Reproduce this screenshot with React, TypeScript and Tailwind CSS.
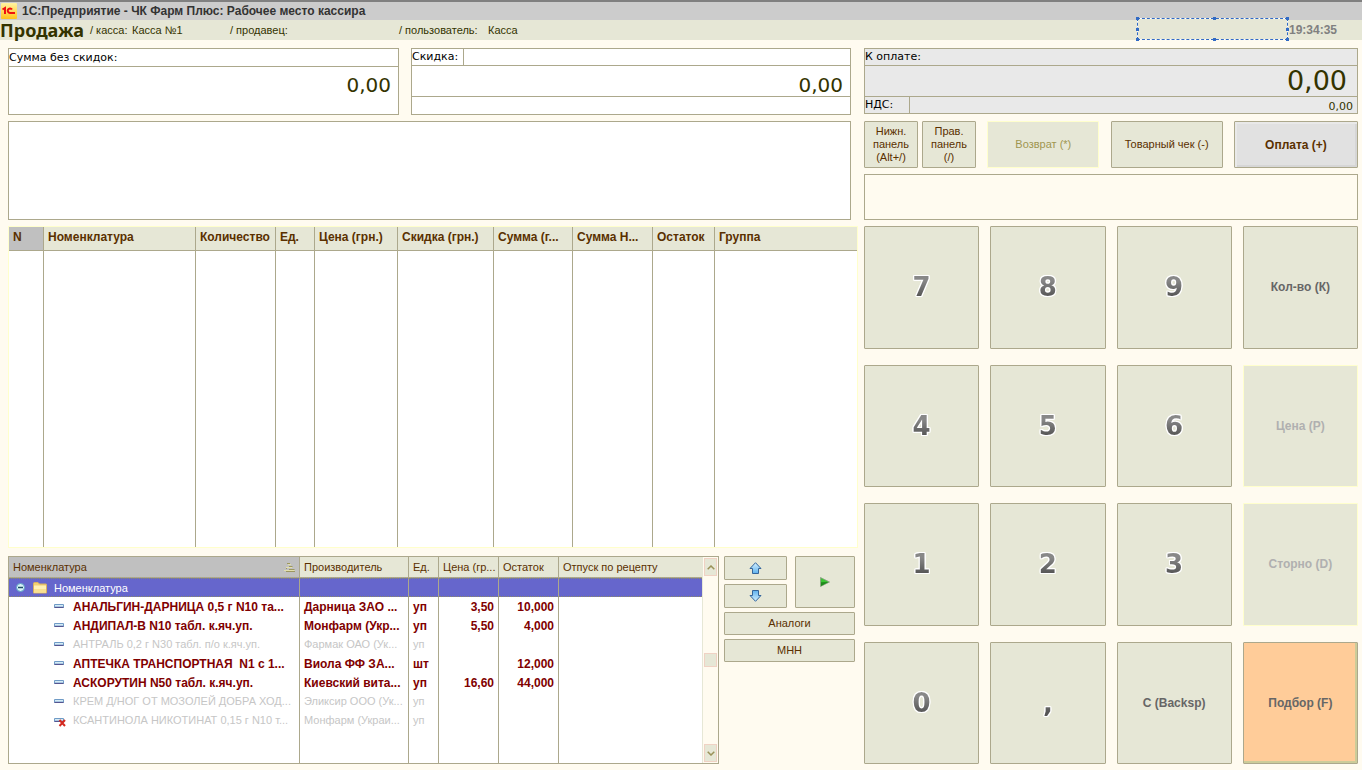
import { ReactNode } from "react";
import clsx from "clsx";

interface Product {
  name: string;
  maker: string;
  unit: string;
  price?: string;
  rest?: string;
  inStock: boolean;
  deleted?: boolean;
}

const products: Product[] = [
  { name: "АНАЛЬГИН-ДАРНИЦА 0,5 г N10 та...", maker: "Дарница ЗАО ...", unit: "уп", price: "3,50", rest: "10,000", inStock: true },
  { name: "АНДИПАЛ-В N10 табл. к.яч.уп.", maker: "Монфарм (Укр...", unit: "уп", price: "5,50", rest: "4,000", inStock: true },
  { name: "АНТРАЛЬ 0,2 г N30 табл. п/о к.яч.уп.", maker: "Фармак ОАО (Ук...", unit: "уп", inStock: false },
  { name: "АПТЕЧКА ТРАНСПОРТНАЯ  N1 с 1...", maker: "Виола ФФ ЗА...", unit: "шт", rest: "12,000", inStock: true },
  { name: "АСКОРУТИН N50 табл. к.яч.уп.", maker: "Киевский вита...", unit: "уп", price: "16,60", rest: "44,000", inStock: true },
  { name: "КРЕМ Д/НОГ ОТ МОЗОЛЕЙ ДОБРА ХОД...", maker: "Эликсир ООО (Ук...", unit: "уп", inStock: false },
  { name: "КСАНТИНОЛА НИКОТИНАТ 0,15 г N10 т...", maker: "Монфарм (Украи...", unit: "уп", inStock: false, deleted: true },
];

const saleColumns = [
  { title: "N", width: "w-[35px]" },
  { title: "Номенклатура", width: "w-[152px]" },
  { title: "Количество", width: "w-[80px]" },
  { title: "Ед.", width: "w-[39px]" },
  { title: "Цена (грн.)", width: "w-[83px]" },
  { title: "Скидка (грн.)", width: "w-[96px]" },
  { title: "Сумма (г...", width: "w-[79px]" },
  { title: "Сумма Н...", width: "w-[80px]" },
  { title: "Остаток", width: "w-[62px]" },
  { title: "Группа", width: "" },
];

const stockColumns = [
  { title: "Производитель", width: "w-[109px]" },
  { title: "Ед.", width: "w-[30px]" },
  { title: "Цена (гр...", width: "w-[60px]" },
  { title: "Остаток", width: "w-[60px]" },
  { title: "Отпуск по рецепту", width: "" },
];

interface Key {
  label: string;
  kind: "digit" | "action" | "disabled" | "active";
}

const keys: Key[] = [
  { label: "7", kind: "digit" },
  { label: "8", kind: "digit" },
  { label: "9", kind: "digit" },
  { label: "Кол-во (К)", kind: "action" },
  { label: "4", kind: "digit" },
  { label: "5", kind: "digit" },
  { label: "6", kind: "digit" },
  { label: "Цена (Р)", kind: "disabled" },
  { label: "1", kind: "digit" },
  { label: "2", kind: "digit" },
  { label: "3", kind: "digit" },
  { label: "Сторно (D)", kind: "disabled" },
  { label: "0", kind: "digit" },
  { label: ",", kind: "digit" },
  { label: "C (Backsp)", kind: "action" },
  { label: "Подбор (F)", kind: "active" },
];

function LogoIcon() {
  return (
    <svg width="16" height="16" viewBox="0 0 16 16" aria-hidden="true">
      <defs>
        <linearGradient id="logo" x1="0" y1="0" x2="0" y2="1">
          <stop offset="0" stopColor="#fff3a0" />
          <stop offset="1" stopColor="#ffc21c" />
        </linearGradient>
      </defs>
      <rect width="16" height="16" rx="1" fill="url(#logo)" />
      <path d="M1.500 6.500l2.500-1.500V11" fill="none" stroke="#ee1010" strokeWidth="2" />
      <path d="M11 6.500A2.300 2.300 0 1 0 9 10H14" fill="none" stroke="#ee1010" strokeWidth="2" />
    </svg>
  );
}

function FolderIcon() {
  return (
    <svg width="14" height="12" viewBox="0 0 14 12" aria-hidden="true">
      <path d="M.5 11V1.500Q.5.500 1.500.500H5l1.500 1.500H13q.5 0 .5.500V11z" fill="#f0cf70" stroke="#d8b060" />
      <path d="M1 10.500V3.500H13V10.500z" fill="#fff0b4" />
      <path d="M1 7H13V10.500H1z" fill="#f9e090" />
    </svg>
  );
}

function CollapseIcon() {
  return (
    <svg width="9" height="9" viewBox="0 0 9 9" aria-hidden="true">
      <circle cx="4.500" cy="4.500" r="4" fill="#d9f3f7" stroke="#5b9fc4" />
      <path d="M2 4.500h5" stroke="#1c4f66" strokeWidth="1.500" />
    </svg>
  );
}

function ItemIcon({ deleted }: { deleted?: boolean }) {
  return (
    <svg width="12" height="10" viewBox="0 0 12 10" className="shrink-0 overflow-visible" aria-hidden="true">
      <rect y="2" width="10" height="4" rx="1" fill="#6f9bc6" />
      <path d="M.5 5.500h9" stroke="#555590" />
      <path d="M1 3.500h8" stroke="#d6ecf6" />
      <path d="M1 4.500h8" stroke="#a9c6e2" />
      {deleted && <path d="M5.500 4l5.500 6M11 4l-5.500 6" stroke="#d42a20" strokeWidth="2" />}
    </svg>
  );
}

function SortIcon() {
  return (
    <svg width="12" height="9" viewBox="0 0 12 9" aria-hidden="true">
      <path d="M5 1.500h3M3 4.500h6M1 7.500h10.500" stroke="#e2dfae" strokeWidth="1" />
      <path d="M4 .5h3M6 3.500h3.500M3 5.500h1M6 6.500h5.500M3 8.500h9" stroke="#9c9760" strokeWidth="1" />
    </svg>
  );
}

function ArrowIcon({ down }: { down?: boolean }) {
  return (
    <svg width="13" height="12" viewBox="0 0 13 12" className={clsx(down && "rotate-180")} aria-hidden="true">
      <defs>
        <linearGradient id="arrow" x1="0" y1="0" x2="0" y2="1">
          <stop offset="0" stopColor="#d4f0ff" />
          <stop offset="1" stopColor="#5eb1ee" />
        </linearGradient>
      </defs>
      <path d="M6.500.700L12 6.500H9.500V11.500H3.500V6.500H1z" fill="url(#arrow)" stroke="#34659c" />
    </svg>
  );
}

function ScrollButton({ down }: { down?: boolean }) {
  return (
    <button
      type="button"
      aria-label={down ? "Вниз" : "Вверх"}
      className="flex h-[18px] w-[13px] items-center justify-center border border-[#f0d2c4] bg-[#e6e7d6]"
    >
      <svg width="8" height="5" viewBox="0 0 8 5" className={clsx(down && "rotate-180")} aria-hidden="true">
        <path d="M.7 4.300L4 1l3.300 3.300" fill="none" stroke="#9a9258" strokeWidth="1.500" />
      </svg>
    </button>
  );
}

interface PanelButtonProps {
  children: ReactNode;
  className?: string;
  disabled?: boolean;
  label?: string;
}

function PanelButton({ children, className, disabled, label }: PanelButtonProps) {
  return (
    <button
      type="button"
      disabled={disabled}
      aria-label={label}
      className={clsx(
        "flex items-center justify-center rounded-[1px] border bg-[#e6e7d6] text-center leading-[13px]",
        disabled ? "border-[#ffffcc] text-[#a09650]" : "border-[#aca88c] text-[#5a3000]",
        className
      )}
    >
      {children}
    </button>
  );
}

function KeyButton({ label, kind }: Key) {
  return (
    <button
      type="button"
      disabled={kind === "disabled"}
      className={clsx(
        "flex items-center justify-center rounded-[1px] border text-[12px] font-bold",
        kind === "digit" && "border-[#aca88c] bg-[#e6e7d6]",
        kind === "action" && "border-[#aca88c] bg-[#e6e7d6] text-[#666666]",
        kind === "disabled" && "border-[#ffffcc] bg-[#e6e7d6] text-[#b0b0b0]",
        kind === "active" &&
          "border-[#aca88c] bg-[#ffcc99] text-[#666666] shadow-[inset_-2px_-2px_0_#cccc99]"
      )}
    >
      {kind === "digit" ? (
        <span className="[filter:drop-shadow(1px_0_0_#fff)_drop-shadow(-1px_0_0_#fff)_drop-shadow(0_1px_0_#fff)_drop-shadow(0_-1px_0_#fff)]">
          <span className="block bg-linear-to-b from-[#888888] from-30% to-[#555555] to-80% bg-clip-text px-1 font-['DejaVu_Sans',sans-serif] text-[26px] leading-8 text-transparent">
            {label}
          </span>
        </span>
      ) : (
        label
      )}
    </button>
  );
}

function SelectionFrame() {
  return (
    <div className="relative -mt-[2px] ml-auto h-[22px] w-[151px] self-start border border-dashed border-[#316ac5] bg-white">
      <div className="size-full bg-[#e6e7d6]" />
      <i className="absolute -top-[2px] -left-[2px] size-[3px] bg-[#316ac5]" />
      <i className="absolute -top-[2px] left-1/2 size-[3px] bg-[#316ac5]" />
      <i className="absolute -top-[2px] -right-[2px] size-[3px] bg-[#316ac5]" />
      <i className="absolute top-[9px] -left-[2px] size-[3px] bg-[#316ac5]" />
      <i className="absolute top-[9px] -right-[2px] size-[3px] bg-[#316ac5]" />
      <i className="absolute -bottom-[2px] -left-[2px] size-[3px] bg-[#316ac5]" />
      <i className="absolute -bottom-[2px] left-1/2 size-[3px] bg-[#316ac5]" />
      <i className="absolute -right-[2px] -bottom-[2px] size-[3px] bg-[#316ac5]" />
    </div>
  );
}

function TopBar() {
  return (
    <header>
      <div className="flex h-5 items-center gap-[5px] border-t-2 border-[#808080] bg-[#cccccc] pl-px">
        <LogoIcon />
        <span className="text-[12px] font-bold text-[#333333]">
          1С:Предприятие - ЧК Фарм Плюс: Рабочее место кассира
        </span>
      </div>
      <div className="flex h-5 items-center bg-[#e6e7d6] text-[11px] text-[#333300]">
        <h1 className="w-[90px] font-['Noto_Sans',sans-serif] text-[18px] leading-5 font-bold">Продажа</h1>
        <span className="w-[42px]">/ касса:</span>
        <span className="w-[98px]">Касса №1</span>
        <span className="w-[169px]">/ продавец:</span>
        <span className="w-[89px]">/ пользователь:</span>
        <span>Касса</span>
        <SelectionFrame />
        <time className="w-[74px] pl-px text-[12px] font-bold text-[#808080]">19:34:35</time>
      </div>
    </header>
  );
}

function Totals() {
  return (
    <div className="mr-[7px] flex gap-3 font-['DejaVu_Sans',sans-serif] text-[11px] text-black">
      <div className="flex h-[67px] w-[391px] flex-col border border-[#aca88c] bg-white">
        <label htmlFor="subtotal" className="h-[18px] border-b border-[#aca88c] leading-[18px]">
          Сумма без скидок:
        </label>
        <input
          id="subtotal"
          readOnly
          value="0,00"
          className="h-9 w-full pr-[7px] text-right text-[20px] text-[#333300] outline-none"
        />
      </div>
      <div className="flex h-[67px] flex-1 flex-col border border-[#aca88c] bg-white">
        <div className="flex h-[17px] border-b border-[#aca88c]">
          <label htmlFor="discount" className="w-[52px] border-r border-[#aca88c] leading-4">
            Скидка:
          </label>
        </div>
        <input
          id="discount"
          readOnly
          value="0,00"
          className="h-[31px] w-full border-b border-[#aca88c] pt-2 pr-[7px] text-right text-[20px] text-[#333300] outline-none"
        />
      </div>
    </div>
  );
}

function SaleTable() {
  return (
    <table className="w-full table-fixed border-separate border-spacing-0 border border-[#ffffcc] bg-white">
      <thead>
        <tr className="h-[24px]">
          {saleColumns.map((col, i) => (
            <th
              key={col.title}
              className={clsx(
                "border-b border-[#aca88c] pb-1 pl-1 text-left text-[12px] font-bold whitespace-nowrap text-[#5a3000]",
                i === 0 ? "bg-[#c0c0c0]" : "bg-[#e6e7d6]",
                i < saleColumns.length - 1 && "border-r",
                col.width
              )}
            >
              {col.title}
            </th>
          ))}
        </tr>
      </thead>
      <tbody>
        <tr className="h-[296px]">
          {saleColumns.map((col, i) => (
            <td key={col.title} className={clsx("border-[#aca88c]", i < saleColumns.length - 1 && "border-r")} />
          ))}
        </tr>
      </tbody>
    </table>
  );
}

function StockTable() {
  const cell = "border-r border-[#aca88c] px-1";
  const selected = "border-y border-r border-y-[#8c8a6a] border-r-[#aca88c] [border-block-style:dotted]";

  return (
    <div className="flex flex-1 border border-[#aca88c] bg-white">
      <table className="w-full flex-1 table-fixed border-separate border-spacing-0 text-[11px] whitespace-nowrap">
        <thead>
          <tr className="h-[21px] text-left text-[#5a3000]">
            <th className="w-[291px] border-r border-b border-[#aca88c] bg-[#c0c0c0] pr-1 pl-1 font-normal">
              <div className="flex items-center justify-between">
                Номенклатура
                <SortIcon />
              </div>
            </th>
            {stockColumns.map((col, i) => (
              <th
                key={col.title}
                className={clsx(
                  "border-b border-[#aca88c] bg-[#e6e7d6] pl-1 font-normal",
                  i < stockColumns.length - 1 && "border-r",
                  col.width
                )}
              >
                {col.title}
              </th>
            ))}
          </tr>
        </thead>
        <tbody>
          <tr className="h-[19px] bg-[#6666cc] text-white">
            <td className={selected}>
              <div className="flex items-center pl-[7px]">
                <CollapseIcon />
                <span className="w-2" />
                <FolderIcon />
                <span className="pl-[7px] leading-4">Номенклатура</span>
              </div>
            </td>
            {stockColumns.map((col, i) => (
              <td key={col.title} className={clsx(selected, i === stockColumns.length - 1 && "border-r-0")} />
            ))}
          </tr>
          {products.map((item) => (
            <tr
              key={item.name}
              className={clsx("h-[19px]", item.inStock ? "text-[12px] font-bold text-[#800000]" : "text-[#c6c6c6]")}
            >
              <td className="border-r border-[#aca88c]">
                <div className="flex items-center gap-[7px] pl-[45px]">
                  <ItemIcon deleted={item.deleted} />
                  <span className="whitespace-pre">{item.name}</span>
                </div>
              </td>
              <td className="border-r border-[#aca88c] pl-1">{item.maker}</td>
              <td className={cell}>{item.unit}</td>
              <td className={clsx(cell, "text-right")}>{item.price}</td>
              <td className={clsx(cell, "text-right")}>{item.rest}</td>
              <td />
            </tr>
          ))}
          <tr className="h-[33px]">
            <td className={cell} />
            <td className={cell} />
            <td className={cell} />
            <td className={cell} />
            <td className={cell} />
            <td />
          </tr>
        </tbody>
      </table>
      <div className="flex w-4 flex-col items-center justify-between border-l border-[#e6e7d6] bg-[#fffbf0] py-px">
        <ScrollButton />
        <div className="h-[14px] w-[13px] border border-[#f0d2c4] bg-[#e6e7d6]" />
        <ScrollButton down />
      </div>
    </div>
  );
}

function StockActions() {
  return (
    <div className="flex w-[131px] flex-col gap-1 text-[11px]">
      <div className="flex gap-2">
        <div className="flex flex-col gap-1">
          <PanelButton label="Переместить вверх" className="h-6 w-[63px]">
            <ArrowIcon />
          </PanelButton>
          <PanelButton label="Переместить вниз" className="h-6 w-[63px]">
            <ArrowIcon down />
          </PanelButton>
        </div>
        <PanelButton label="Выбрать" className="flex-1">
          <svg width="10" height="10" viewBox="0 0 10 10" aria-hidden="true">
            <path d="M.5.500L9.500 5L.5 9.500z" fill="#3cc434" stroke="#8a9c84" strokeWidth=".8" />
            <path d="M1 5.200L8.500 5L1 9z" fill="#1f8a1c" />
          </svg>
        </PanelButton>
      </div>
      <PanelButton className="h-[23px]">Аналоги</PanelButton>
      <PanelButton className="h-[23px]">МНН</PanelButton>
    </div>
  );
}

function Payment() {
  return (
    <div className="h-[66px] border border-[#aca88c] bg-[#e9e9e9] font-['DejaVu_Sans',sans-serif] text-[11px] text-black">
      <label htmlFor="total" className="block h-[17px] border-b border-[#aca88c] leading-4">
        К оплате:
      </label>
      <input
        id="total"
        readOnly
        value="0,00"
        className="block h-[31px] w-full border-b border-[#aca88c] pr-[10px] text-right text-[27px] text-[#333300] outline-none"
      />
      <div className="flex h-4">
        <label htmlFor="vat" className="w-[45px] border-r border-[#aca88c] leading-4">
          НДС:
        </label>
        <input
          id="vat"
          readOnly
          value="0,00"
          className="min-w-0 flex-1 pt-1 pr-1 text-right text-[#333300] outline-none"
        />
      </div>
    </div>
  );
}

export default function App() {
  return (
    <div className="flex min-h-screen flex-col bg-[#fffbf0] font-['Liberation_Sans',Arial,sans-serif]">
      <TopBar />
      <main className="flex flex-1 gap-[6px] pt-2 pr-1 pb-[6px] pl-2">
        <section className="flex min-w-0 flex-1 flex-col">
          <Totals />
          <textarea
            readOnly
            aria-label="Сообщения"
            className="mt-[6px] mr-[7px] mb-[6px] block h-[99px] resize-none border border-[#aca88c] bg-white outline-none"
          />
          <SaleTable />
          <div className="mt-2 mr-[3px] flex flex-1 gap-[5px]">
            <StockTable />
            <StockActions />
          </div>
        </section>
        <section className="flex w-[494px] shrink-0 flex-col gap-[6px]">
          <Payment />
          <div className="mt-px flex h-[47px] justify-between text-[11px]">
            <div className="flex gap-1">
              <PanelButton className="w-[54px]">
                Нижн.
                <br />
                панель
                <br />
                (Alt+/)
              </PanelButton>
              <PanelButton className="w-[54px]">
                Прав.
                <br />
                панель
                <br />
                (/)
              </PanelButton>
            </div>
            <PanelButton className="w-[112px]" disabled>
              Возврат (*)
            </PanelButton>
            <PanelButton className="w-[112px]">Товарный чек (-)</PanelButton>
            <button
              type="button"
              className="w-[124px] rounded-[1px] border border-[#aca88c] bg-[#e1e1e1] text-[12px] font-bold text-[#5a3000] shadow-[inset_2px_2px_0_#e9e9e9,inset_-2px_-2px_0_#d6d6d6]"
            >
              Оплата (+)
            </button>
          </div>
          <input
            readOnly
            aria-label="Ввод"
            className="h-[46px] border border-[#aca88c] bg-[#fffbf0] outline-none"
          />
          <div className="grid flex-1 grid-cols-4 grid-rows-4 gap-x-[11px] gap-y-4">
            {keys.map((key) => (
              <KeyButton key={key.label} {...key} />
            ))}
          </div>
        </section>
      </main>
    </div>
  );
}
